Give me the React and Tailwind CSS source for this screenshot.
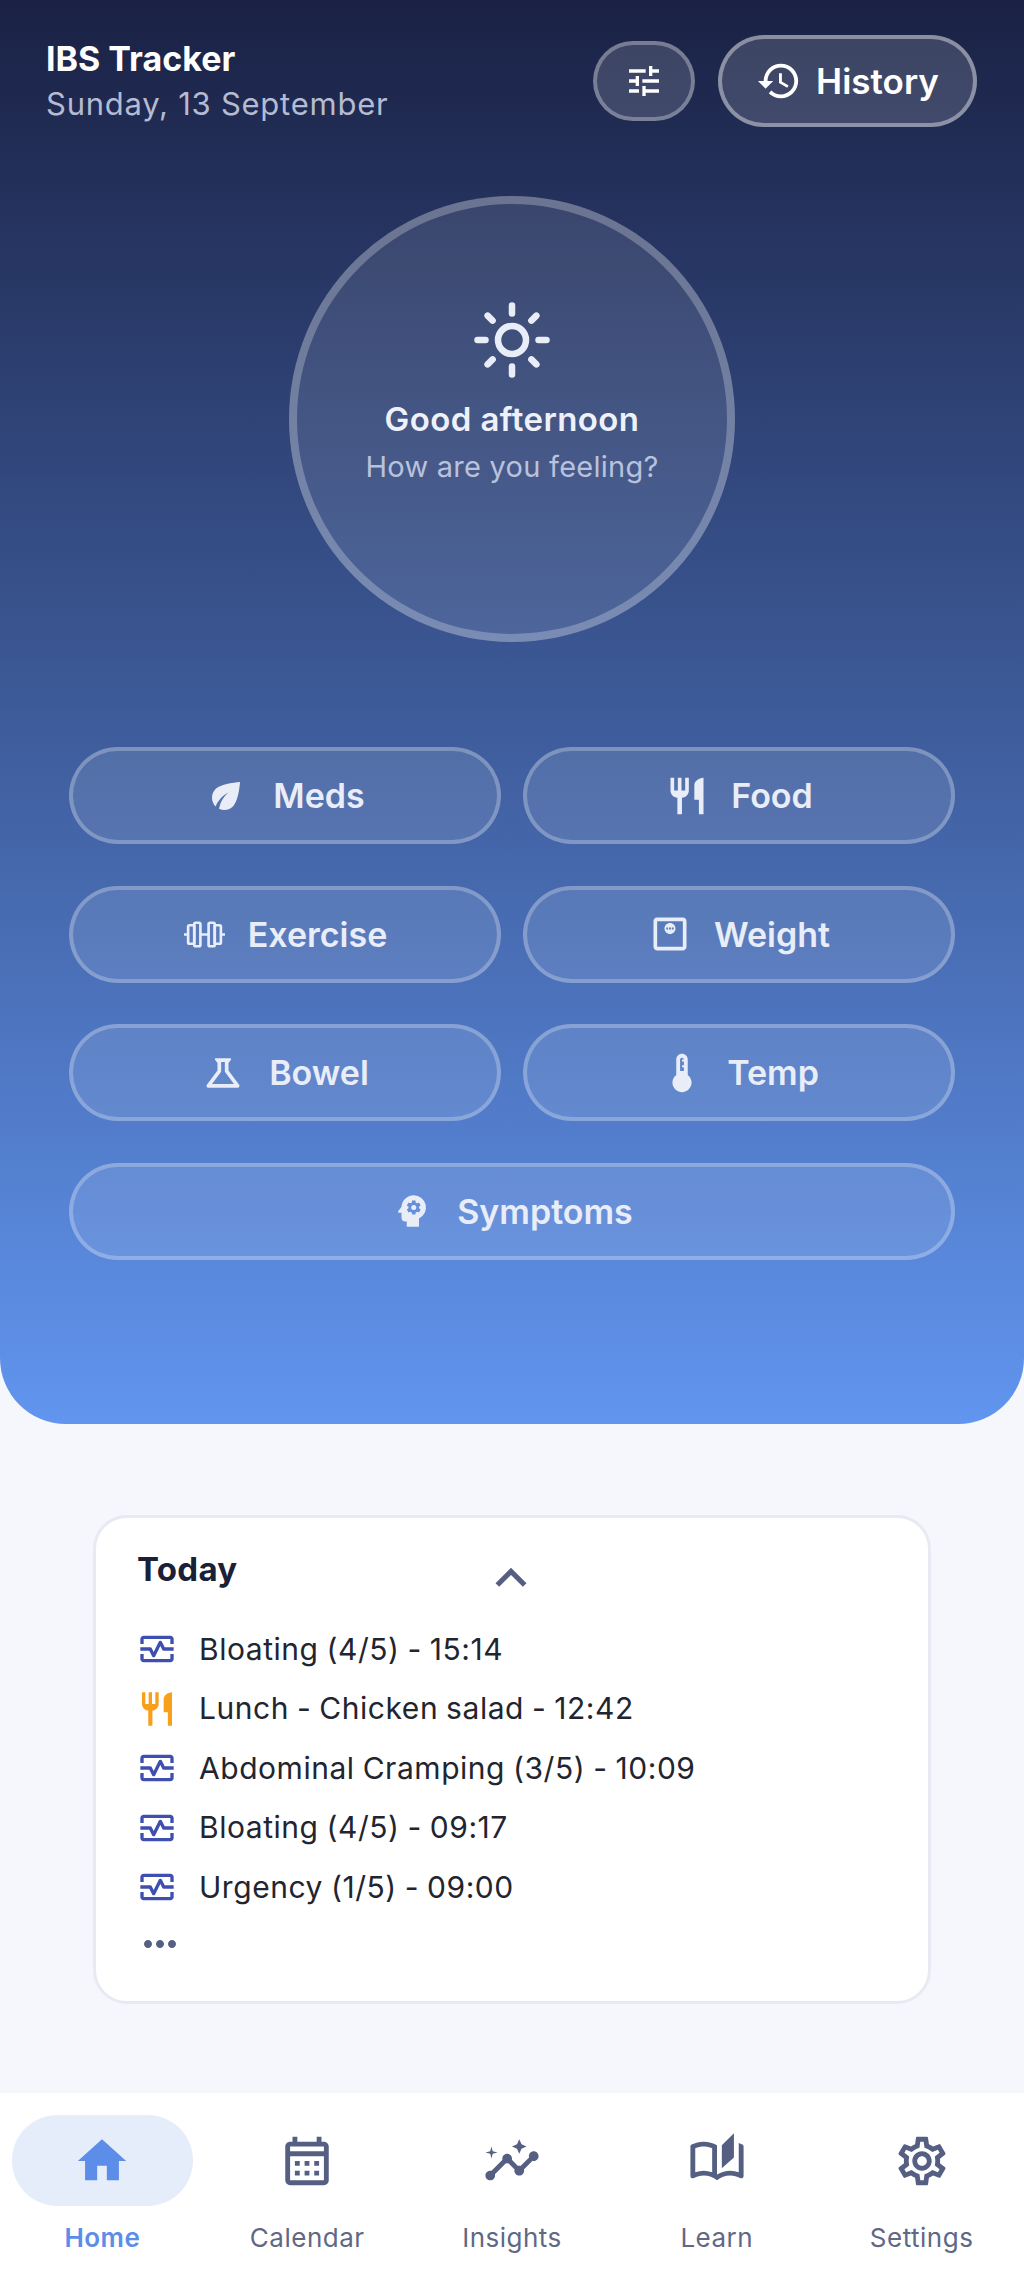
import * as React from "react";
import {
  MdTune,
  MdHistory,
  MdEco,
  MdRestaurant,
  MdOutlineMonitorWeight,
  MdOutlineScience,
  MdDeviceThermostat,
  MdPsychology,
  MdOutlineMonitorHeart,
  MdKeyboardArrowUp,
  MdMoreHoriz,
  MdHome,
  MdOutlineCalendarMonth,
  MdInsights,
  MdOutlineAutoStories,
  MdOutlineSettings,
} from "react-icons/md";

const font = "[font-family:Inter,'Noto_Sans',sans-serif]";

const entries = [
  { text: "Bloating (4/5) - 15:14", food: false },
  { text: "Lunch - Chicken salad - 12:42", food: true },
  { text: "Abdominal Cramping (3/5) - 10:09", food: false },
  { text: "Bloating (4/5) - 09:17", food: false },
  { text: "Urgency (1/5) - 09:00", food: false },
];

const navItems = [
  { label: "Home", Icon: MdHome, active: true },
  { label: "Calendar", Icon: MdOutlineCalendarMonth },
  { label: "Insights", Icon: MdInsights },
  { label: "Learn", Icon: MdOutlineAutoStories },
  { label: "Settings", Icon: MdOutlineSettings },
];

// the dumbbell in the reference is an outlined one, not in the icon set
function Dumbbell({ className }) {
  return (
    <svg viewBox="0 0 42 26" fill="none" stroke="currentColor" strokeWidth="2.6" className={className}>
      <rect x="5" y="4" width="6" height="18" rx="1.5" />
      <rect x="11" y="1.5" width="6" height="23" rx="1.5" />
      <rect x="25" y="1.5" width="6" height="23" rx="1.5" />
      <rect x="31" y="4" width="6" height="18" rx="1.5" />
      <path d="M17 13h8M5 13H1M37 13h4" />
    </svg>
  );
}

// thicker rays than the material light_mode glyph
function Sun({ className }) {
  return (
    <svg viewBox="0 0 80 80" fill="none" stroke="currentColor" strokeWidth="6.5" strokeLinecap="round" className={className}>
      <circle cx="40" cy="40" r="14" />
      <path d="M40 5.5v8M40 66.5v8M5.5 40h8M66.5 40h8M15.6 15.6l5 5M59.4 59.4l5 5M15.6 64.4l5-5M59.4 20.6l5-5" />
    </svg>
  );
}

function ActionButton({ label, icon, gap = "gap-[30px]", className = "" }) {
  return (
    <button
      type="button"
      className={`flex h-[97px] items-center justify-center rounded-full border-4 border-white/25 bg-white/10 text-[#e9edf8] ${gap} ${className}`}
    >
      {icon}
      <span className="text-[34px] font-semibold">{label}</span>
    </button>
  );
}

export default function App() {
  return (
    <div className={`flex h-[2276px] flex-col bg-[#f5f7fc] ${font}`}>
      <section className="flex h-[1424px] flex-col rounded-b-[66px] bg-[linear-gradient(180deg,#1a2144,#6195ef)] px-[46px] pt-[35px]">
        <header className="flex items-center justify-between">
          <div className="-mt-[3px]">
            <h1 className="text-[34px] leading-[46px] font-bold text-white">IBS Tracker</h1>
            <p className="mt-[2px] text-[31px] leading-[40px] tracking-[0.75px] text-[#b4bbd2]">Sunday, 13 September</p>
          </div>
          <div className="mr-[1px] flex items-center gap-[23px]">
            <button
              type="button"
              className="flex h-[80px] w-[102px] items-center justify-center rounded-full border-4 border-white/30 bg-white/15 text-white"
            >
              <MdTune className="h-[40px] w-[40px]" />
            </button>
            <button
              type="button"
              className="flex h-[92px] w-[259px] items-center justify-center gap-[14px] rounded-full border-4 border-white/40 bg-white/15 text-white"
            >
              <MdHistory className="h-[46px] w-[46px]" />
              <span className="text-[35px] font-semibold">History</span>
            </button>
          </div>
        </header>

        <div className="mt-[69px] flex h-[446px] w-[446px] flex-col items-center self-center rounded-full border-[8px] border-white/25 bg-white/10 pt-[96px]">
          <Sun className="h-[80px] w-[80px] text-[#e9edf8]" />
          <p className="mt-[18px] text-[33px] leading-[42px] font-semibold tracking-[0.4px] text-[#eef1fa]">Good afternoon</p>
          <p className="mt-[7px] text-[29px] leading-[40px] tracking-[0.25px] text-[#b9c2dc]">How are you feeling?</p>
        </div>

        <div className="mt-[105px] grid grid-cols-2 gap-x-[22px] gap-y-[41.5px] px-[23px]">
          <ActionButton label="Meds" icon={<MdEco className="h-[42px] w-[42px]" />} gap="gap-[26px]" />
          <ActionButton label="Food" icon={<MdRestaurant className="h-[44px] w-[44px]" />} gap="gap-[22px]" />
          <ActionButton label="Exercise" icon={<Dumbbell className="h-[27px] w-[43px]" />} gap="gap-[22px]" />
          <ActionButton label="Weight" icon={<MdOutlineMonitorWeight className="h-[44px] w-[44px]" />} gap="gap-[22px]" />
          <ActionButton label="Bowel" icon={<MdOutlineScience className="h-[44px] w-[44px]" />} gap="gap-[24px]" />
          <ActionButton label="Temp" icon={<MdDeviceThermostat className="h-[46px] w-[46px]" />} gap="gap-[22px]" />
          <ActionButton
            label="Symptoms"
            icon={<MdPsychology className="h-[42px] w-[42px]" />}
            gap="gap-[24px]"
            className="col-span-2"
          />
        </div>
      </section>

      <main className="flex flex-1 flex-col items-center pt-[91px]">
        <div className="h-[489px] w-[838px] rounded-[34px] border-[3px] border-[#e8eaf3] bg-white pt-[29px] pr-[40px] pl-[41px]">
          <div className="grid grid-cols-[1fr_auto_1fr] items-start">
            <h2 className="text-[33px] leading-[44px] font-bold tracking-[0.3px] text-[#1a2036]">Today</h2>
            <MdKeyboardArrowUp className="ml-[-4px] h-[62px] w-[62px] text-[#545f82]" />
            <span />
          </div>
          <ul className="mt-[20px] flex flex-col gap-[19.5px]">
            {entries.map((entry) => (
              <li key={entry.text} className="flex h-[40px] items-center gap-[22px]">
                {entry.food ? (
                  <MdRestaurant className="h-[40px] w-[40px] text-[#f9a01b]" />
                ) : (
                  <MdOutlineMonitorHeart className="h-[40px] w-[40px] text-[#3f4fb0]" />
                )}
                <span className="text-[30px] tracking-[0.54px] [word-spacing:-1px] text-[#22252f]">{entry.text}</span>
              </li>
            ))}
          </ul>
          <MdMoreHoriz className="mt-[13px] ml-[-1px] h-[48px] w-[48px] text-[#545f82]" />
        </div>
      </main>

      <nav className="grid h-[183px] grid-cols-5 bg-white">
        {navItems.map(({ label, Icon, active }) => (
          <div key={label} className="flex flex-col items-center pt-[22px]">
            <div
              className={`flex h-[91px] w-[181px] items-center justify-center rounded-full ${
                active ? "bg-[#e5edfb] text-[#5b8de9]" : "text-[#545f82]"
              }`}
            >
              <Icon className="h-[58px] w-[58px]" />
            </div>
            <span
              className={`mt-[14px] text-[26px] leading-[36px] tracking-[0.5px] ${
                active ? "font-semibold text-[#5b8de9]" : "text-[#5f6885]"
              }`}
            >
              {label}
            </span>
          </div>
        ))}
      </nav>
    </div>
  );
}
